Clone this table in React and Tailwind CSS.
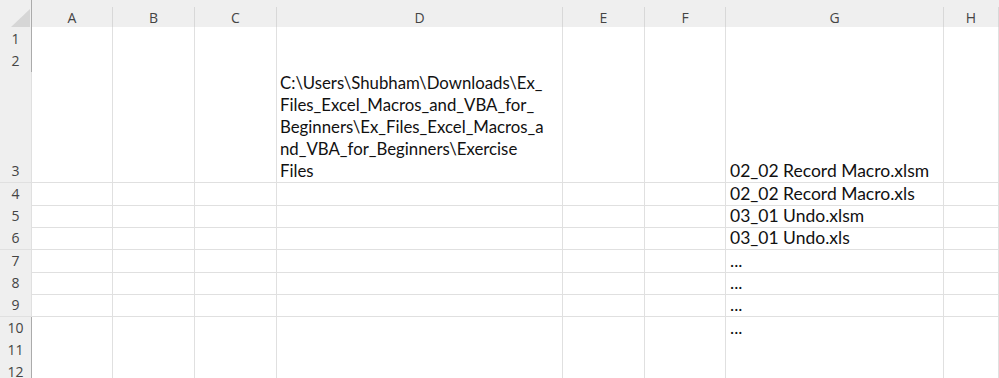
import React from "react";

const columns = ["A", "B", "C", "D", "E", "F", "G", "H"];

const pathLines = [
  "C:\\Users\\Shubham\\Downloads\\Ex_",
  "Files_Excel_Macros_and_VBA_for_",
  "Beginners\\Ex_Files_Excel_Macros_a",
  "nd_VBA_for_Beginners\\Exercise",
  "Files",
];

// height classes written out so tailwind picks them up
const rows = [
  { n: 1, h: "h-[23px]", line: false },
  { n: 2, h: "h-[22px]", line: false },
  { n: 3, h: "h-[111px]", line: true, d: pathLines, g: "02_02 Record Macro.xlsm" },
  { n: 4, h: "h-[22px]", line: true, g: "02_02 Record Macro.xls" },
  { n: 5, h: "h-[22px]", line: true, g: "03_01 Undo.xlsm" },
  { n: 6, h: "h-[23px]", line: true, g: "03_01 Undo.xls" },
  { n: 7, h: "h-[22px]", line: true, g: "..." },
  { n: 8, h: "h-[22px]", line: true, g: "..." },
  { n: 9, h: "h-[23px]", line: true, g: "..." },
  { n: 10, h: "h-[22px]", line: false, g: "..." },
  { n: 11, h: "h-[22px]", line: false },
  { n: 12, h: "h-[22px]", line: false },
];

const gridCols =
  "grid grid-cols-[32px_81px_82px_82px_286px_82px_81px_218px_1fr]";

function HeaderRow() {
  return (
    <div className={`${gridCols} h-[27px] bg-[#efefef]`}>
      <div className="relative border-r border-[#ababab]">
        <svg
          className="absolute left-[11px] top-[9px]"
          width="19"
          height="18"
          viewBox="0 0 19 18"
        >
          <polygon points="19,0 19,18 0,18" fill="#d6d6d6" />
        </svg>
      </div>
      {columns.map((c) => (
        <div key={c} className="pt-[7px] h-full">
          <div className="h-full border-r border-[#d8d8d8] flex items-center justify-center text-[14px] text-[#444] font-['Open_Sans',sans-serif]">
            {c}
          </div>
        </div>
      ))}
    </div>
  );
}

function Row({ row }) {
  const line = row.line ? "border-b border-[#e0e0e0]" : "";
  return (
    <div className={`${gridCols} ${row.h}`}>
      <div
        className={`bg-[#efefef] border-r border-[#ababab] flex items-end justify-center ${line}`}
      >
        <span className="h-[22px] leading-[22px] text-[14px] text-[#444] font-['Open_Sans',sans-serif]">
          {row.n}
        </span>
      </div>
      {columns.map((c) => (
        <div
          key={c}
          className={`border-r border-[#e0e0e0] flex flex-col justify-end overflow-hidden ${line}`}
        >
          {c === "D" && row.d && (
            <div className="pl-[3px] text-[16.8px] leading-[22px] text-[#111] font-['Lato','Liberation_Sans',sans-serif]">
              {row.d.map((l) => (
                <div key={l} className="whitespace-nowrap">
                  {l}
                </div>
              ))}
            </div>
          )}
          {c === "G" && row.g && (
            <div className="pl-[4px] h-[22px] leading-[22px] whitespace-nowrap text-[17.5px] text-[#111] font-['Lato','Liberation_Sans',sans-serif]">
              {row.g}
            </div>
          )}
        </div>
      ))}
    </div>
  );
}

export default function App() {
  return (
    <div className="w-[999px] h-[378px] overflow-hidden bg-white">
      <HeaderRow />
      {rows.map((r) => (
        <Row key={r.n} row={r} />
      ))}
    </div>
  );
}
